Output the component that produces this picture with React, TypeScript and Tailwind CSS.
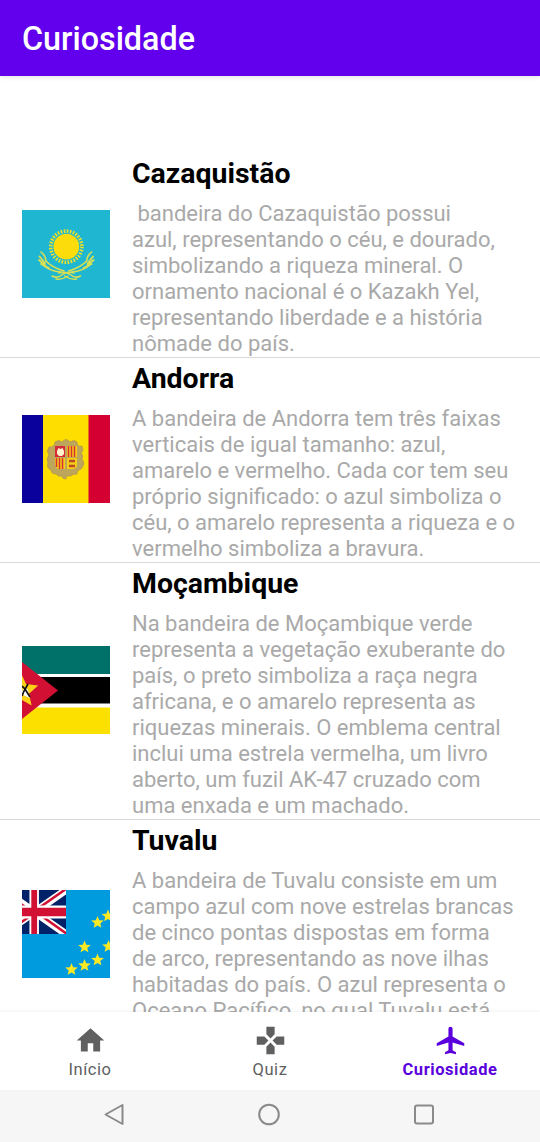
import type { ReactNode } from "react";

function spike(cx: number, cy: number, r: number, inner: number, n: number) {
  return Array.from({ length: n * 2 }, (_, i) => {
    const a = (Math.PI * i) / n - Math.PI / 2;
    const d = i % 2 ? inner : r;
    return `${(cx + d * Math.cos(a)).toFixed(2)},${(cy + d * Math.sin(a)).toFixed(2)}`;
  }).join(" ");
}

const flagClass = "mb-[2px] block size-[88px]";

function Kazakhstan() {
  const wing = (
    <g fill="none" stroke="#d6df55" strokeLinecap="round">
      <path d="M19 42Q24 46 24 51Q29 57 42 61" strokeWidth="1.600" />
      <path d="M17.500 46.500L23 53M17 50L23 55M19 54L27 58" strokeWidth="1.900" />
      <path d="M21 55Q27 61 39 62" strokeWidth="1.600" />
      <path d="M30 66Q36 69 41 64Q46 61 52 63M34 69Q40 70 46 66" strokeWidth="1.500" />
    </g>
  );
  return (
    <svg viewBox="0 0 88 88" className={flagClass}>
      <path fill="#1eb6d0" d="M0 0h88v88H0z" />
      <circle cx="44.300" cy="36.700" r="15.600" fill="none" stroke="#e8e22e" strokeWidth="3.600" strokeDasharray="1.650 1.413" />
      <circle cx="44.300" cy="36.700" r="12.900" fill="#fddc0c" />
      {wing}
      <g transform="translate(88.6 0) scale(-1 1)">{wing}</g>
    </svg>
  );
}

function Andorra() {
  return (
    <svg viewBox="0 0 88 88" className={flagClass}>
      <path fill="#fedd00" d="M0 0h88v88H0z" />
      <path fill="#0a009c" d="M0 0h21v88H0z" />
      <path fill="#d50032" d="M66.500 0H88v88H66.500z" />
      <path fill="#bda55c" stroke="#a78f50" strokeWidth=".6" d="M33 27q4-3 7 0q4-5 8 0q4-3 7 0q0 5 5 4q2 5-1 7q3 3 1 6q4 5-1 10q-4 1-4 5q-5 0-6 2q-5-1-5 3q-4 0-4-3q-4 1-6-2q-5 0-5-4q-5-2-3-7q-2-5 1-8q-3-4 0-8q6 0 6-5z" />
      <path fill="#d52b38" d="M33 31h10v11H33z" />
      <path fill="#fff1c9" d="M35 36l1.500-3 2 1 2-1 1.500 3v3l-2 2h-3l-2-2z" />
      <path fill="#f8ce16" d="M45 31h10v11H45zM33 43h10v11H36q-3-2-3-4zM45 43h10v7q0 3-4 4h-6z" />
      <path stroke="#d33136" strokeWidth="1.500" d="M46.500 31v11M49.500 31v11M52.500 31v11M34.500 43v9M37.500 43v11M40.500 43v11" />
      <path stroke="#b94a27" strokeWidth="2.400" d="M47 46h6M47 51h6" />
      <path stroke="#bda55c" d="M44 31v25M33 42.500h22" />
    </svg>
  );
}

function Mozambique() {
  return (
    <svg viewBox="0 0 88 88" className={flagClass}>
      <path fill="#fff" d="M0 0h88v88H0z" />
      <path fill="#007168" d="M0 0h88v28H0z" />
      <path d="M0 31h88v26.500H0z" />
      <path fill="#fce100" d="M0 61.500h88V88H0z" />
      <path fill="#d21034" d="M0 16l36 28.500L0 73z" />
      <polygon fill="#fcd116" points={spike(-1, 45, 18, 8.5, 5)} />
      <path fill="#fff" d="M0 45l3-4 3 3 2 8-5-2-3-2z" />
      <path stroke="#111" strokeWidth="1.700" fill="none" d="M0 50l2-5 4-7M0 40l3 3 5 8" />
    </svg>
  );
}

const stars = [[86, 26], [75.5, 32.5], [86.5, 56.5], [62.500, 57], [75.500, 70], [62.500, 75.500], [49.500, 79.500]];

function Tuvalu() {
  return (
    <svg viewBox="0 0 88 88" className={flagClass}>
      <path fill="#009bdf" d="M0 0h88v88H0z" />
      <svg width="44" height="44" viewBox="0 0 44 44">
        <path fill="#012169" d="M0 0h44v44H0z" />
        <path stroke="#fff" strokeWidth="7.500" d="M-19 0l63 44M-19 44L44 0" />
        <path stroke="#d21034" strokeWidth="2.600" d="M-19 1.500L12.500 23.500M12.500 21L44-1M-19 45L12.500 23M14 22l31 22" />
        <path stroke="#fff" strokeWidth="9.500" d="M12.200 0v44" />
        <path stroke="#fff" strokeWidth="13" d="M0 22h44" />
        <path stroke="#d21034" strokeWidth="5.800" d="M12.200 0v44" />
        <path stroke="#d21034" strokeWidth="8.400" d="M0 22h44" />
      </svg>
      {stars.map(([x, y]) => (
        <polygon key={`${x}-${y}`} fill="#fee923" points={spike(x, y, 6.6, 2.9, 5)} />
      ))}
    </svg>
  );
}

const items: { name: string; flag: ReactNode; lines: string[] }[] = [
  {
    name: "Cazaquistão",
    flag: <Kazakhstan />,
    lines: [
      " bandeira do Cazaquistão possui",
      "azul, representando o céu, e dourado,",
      "simbolizando a riqueza mineral. O",
      "ornamento nacional é o Kazakh Yel,",
      "representando liberdade e a história",
      "nômade do país.",
    ],
  },
  {
    name: "Andorra",
    flag: <Andorra />,
    lines: [
      "A bandeira de Andorra tem três faixas",
      "verticais de igual tamanho: azul,",
      "amarelo e vermelho. Cada cor tem seu",
      "próprio significado: o azul simboliza o",
      "céu, o amarelo representa a riqueza e o",
      "vermelho simboliza a bravura.",
    ],
  },
  {
    name: "Moçambique",
    flag: <Mozambique />,
    lines: [
      "Na bandeira de Moçambique verde",
      "representa a vegetação exuberante do",
      "país, o preto simboliza a raça negra",
      "africana, e o amarelo representa as",
      "riquezas minerais. O emblema central",
      "inclui uma estrela vermelha, um livro",
      "aberto, um fuzil AK-47 cruzado com",
      "uma enxada e um machado.",
    ],
  },
  {
    name: "Tuvalu",
    flag: <Tuvalu />,
    lines: [
      "A bandeira de Tuvalu consiste em um",
      "campo azul com nove estrelas brancas",
      "de cinco pontas dispostas em forma",
      "de arco, representando as nove ilhas",
      "habitadas do país. O azul representa o",
      "Oceano Pacífico, no qual Tuvalu está",
      "localizado.",
    ],
  },
];

const tabs = [
  { label: "Início", active: false, d: "M10 20v-6h4v6h5v-8h3L12 3 2 12h3v8z" },
  {
    label: "Quiz",
    active: false,
    d: "M15 7.500V2H9v5.500l3 3 3-3zM7.500 9H2v6h5.500l3-3-3-3zM9 16.500V22h6v-5.500l-3-3-3 3zM16.500 9l-3 3 3 3H22V9h-5.500z",
  },
  {
    label: "Curiosidade",
    active: true,
    d: "M22 16v-2l-8.500-5V3.500c0-.83-.67-1.500-1.500-1.500s-1.500.67-1.500 1.500V9L2 14v2l8.500-2.500V19L8 20.500V22l4-1 4 1v-1.500L13.500 19v-5.500L22 16z",
  },
];

export default function App() {
  return (
    <div className="flex h-[1142px] w-[540px] flex-col overflow-hidden bg-white font-['Roboto',sans-serif]">
      <header className="z-10 flex h-[76px] shrink-0 items-center bg-[#6200ee] px-[22px] pt-[2px] shadow-[0_1px_5px_rgba(0,0,0,0.12)]">
        <h1 className="text-[32.300px] leading-9 font-medium text-white">Curiosidade</h1>
      </header>

      <main className="min-h-0 flex-1 overflow-hidden pt-[77px]">
        {items.map((item) => (
          <article key={item.name} className="flex items-center border-b border-[#d9d9d9] pl-[22px]">
            {item.flag}
            <div className="ml-[22px] flex-1">
              <h2 className="h-[48px] pt-[5px] text-[28.450px] leading-8 font-bold text-black">{item.name}</h2>
              <p className="text-[22px] leading-[26px] text-[#a9a9a9]">
                {item.lines.map((line) => (
                  <span key={line} className="block whitespace-pre">{line}</span>
                ))}
              </p>
            </div>
          </article>
        ))}
      </main>

      <nav className="z-10 grid h-[78px] shrink-0 grid-cols-3 bg-white shadow-[0_-1px_3px_rgba(0,0,0,0.06)]">
        {tabs.map((tab) => (
          <div
            key={tab.label}
            className={
              tab.active
                ? "flex flex-col items-center pt-[12px] font-bold text-[#5a00dc]"
                : "flex flex-col items-center pt-[12px] text-[#606060]"
            }
          >
            <svg viewBox="0 0 24 24" className="size-[33px]" fill="currentColor">
              <path d={tab.d} />
            </svg>
            <span className="mt-[3px] text-[16.500px] leading-5 tracking-[0.55px]">{tab.label}</span>
          </div>
        ))}
      </nav>

      <footer className="flex h-[52px] shrink-0 items-center justify-center gap-[131px] bg-[#f6f6f6] pr-[3px] pb-[4px]">
        <svg viewBox="0 0 24 24" className="size-6" fill="none" stroke="#8a8a8a" strokeWidth="2" strokeLinejoin="round">
          <path d="M20.500 3v19L3.500 12.500z" />
        </svg>
        <svg viewBox="0 0 24 24" className="size-6" fill="none" stroke="#8a8a8a" strokeWidth="2">
          <circle cx="12" cy="12.500" r="9.800" />
        </svg>
        <svg viewBox="0 0 24 24" className="size-6" fill="none" stroke="#8a8a8a" strokeWidth="2">
          <rect x="3" y="3.500" width="18" height="18" rx="2" />
        </svg>
      </footer>
    </div>
  );
}
